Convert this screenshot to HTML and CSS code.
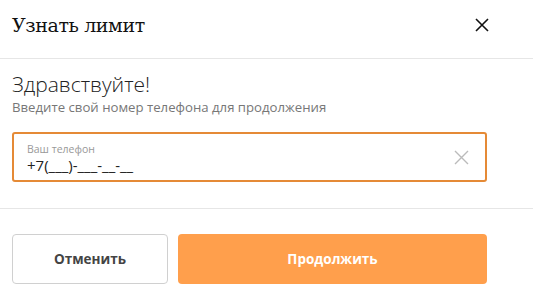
FILE: index.html
```html
<!DOCTYPE html>
<html lang="ru">
<head>
    <meta charset="UTF-8">
    <meta name="viewport" content="width=device-width, initial-scale=1.0">
    <title>Узнать лимит</title>
    <link rel="stylesheet" href="styles.css">
</head>
<body>
    <div class="modal">
        <div class="modal-header">
            <h2>Узнать лимит</h2>
            <button class="close-btn" aria-label="Закрыть">
                <svg width="14" height="14" viewBox="0 0 14 14">
                    <path d="M1 1L13 13M13 1L1 13" stroke="#111" stroke-width="1.6" fill="none"/>
                </svg>
            </button>
        </div>

        <div class="modal-body">
            <h3>Здравствуйте!</h3>
            <p class="hint">Введите свой номер телефона для продолжения</p>
            <div class="field">
                <div class="field-text">
                    <label for="phone">Ваш телефон</label>
                    <input type="text" id="phone" value="+7(___)-___-__-__">
                </div>
                <button class="clear-btn" aria-label="Очистить">
                    <svg width="15" height="15" viewBox="0 0 15 15">
                        <path d="M1 1L14 14M14 1L1 14" stroke="#bbb" stroke-width="1.4" fill="none"/>
                    </svg>
                </button>
            </div>
        </div>

        <div class="modal-footer">
            <button class="btn btn-cancel">Отменить</button>
            <button class="btn btn-primary">Продолжить</button>
        </div>
    </div>
</body>
</html>
```

FILE: styles.css
```css
* {
    margin: 0;
    padding: 0;
    box-sizing: border-box;
    font-family: "Open Sans", Arial, sans-serif;
}

body {
    background: #fff;
    width: 549px;
}

.modal {
    width: 533px;
    background: #fff;
}

.modal-header {
    display: flex;
    justify-content: space-between;
    align-items: center;
    height: 59px;
    padding: 0 44px 8px 12px;
    border-bottom: 1px solid #e6e6e6;
}

.modal-header h2 {
    font-family: "DejaVu Serif", "Liberation Serif", serif;
    font-weight: normal;
    font-size: 19px;
    color: #111;
    letter-spacing: -0.4px;
}

.close-btn, .clear-btn {
    background: none;
    border: none;
    display: flex;
    cursor: pointer;
}

.modal-body {
    padding: 12px 46px 26px 12px;
    border-bottom: 1px solid #e6e6e6;
}

.modal-body h3 {
    font-family: "Open Sans", sans-serif;
    font-weight: 300;
    font-size: 21px;
    line-height: 26px;
    color: #222;
}

.hint {
    font-size: 13.2px;
    line-height: 20px;
    color: #777;
    margin-bottom: 15px;
}

.field {
    display: flex;
    align-items: center;
    justify-content: space-between;
    height: 50px;
    border: 2px solid #e58a36;
    border-radius: 3px;
    padding: 0 16px 0 13px;
}

.field-text {
    display: flex;
    flex-direction: column;
    padding-top: 2px;
}

.field label {
    font-size: 10.5px;
    line-height: 14px;
    color: #999;
}

.field input {
    border: none;
    outline: none;
    font-size: 15px;
    line-height: 18px;
    color: #222;
    padding: 0;
    width: 300px;
    background: transparent;
}

.modal-footer {
    display: flex;
    gap: 10px;
    padding: 25px 46px 0 12px;
}

.btn {
    height: 50px;
    border-radius: 4px;
    font-size: 13.5px;
    font-weight: bold;
    cursor: pointer;
}

.btn-cancel {
    width: 156px;
    background: #fff;
    border: 1px solid #d0d0d0;
    color: #444;
}

.btn-primary {
    flex: 1;
    background: #ff9f4c;
    border: none;
    color: #fff;
}
```
